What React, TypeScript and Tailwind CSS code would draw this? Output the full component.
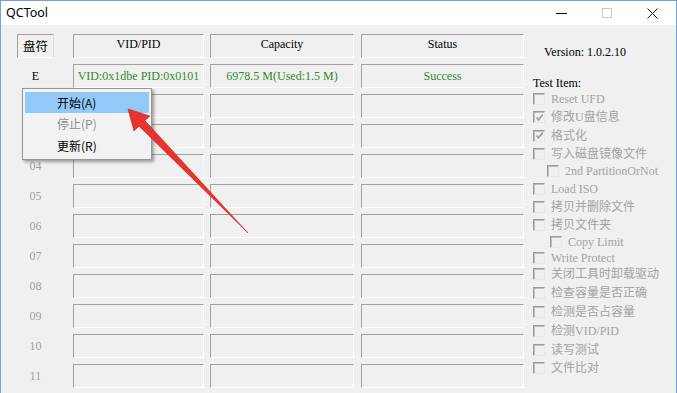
import React from "react";

const serif = "font-['Liberation_Serif','Noto_Sans_CJK_SC',serif]";

const rows = ["E", "02", "03", "04", "05", "06", "07", "08", "09", "10", "11"];

// test items: label, row height, indent, checked
const testItems: { label: string; h: string; indent: string; checked?: boolean }[] = [
  { label: "Reset UFD", h: "h-[18px]", indent: "pl-0" },
  { label: "修改U盘信息", h: "h-[18px]", indent: "pl-0", checked: true },
  { label: "格式化", h: "h-[19px]", indent: "pl-0", checked: true },
  { label: "写入磁盘镜像文件", h: "h-[17px]", indent: "pl-0" },
  { label: "2nd PartitionOrNot", h: "h-[18px]", indent: "pl-[14px]" },
  { label: "Load ISO", h: "h-[18px]", indent: "pl-0" },
  { label: "拷贝并删除文件", h: "h-[18px]", indent: "pl-0" },
  { label: "拷贝文件夹", h: "h-[17px]", indent: "pl-0" },
  { label: "Copy Limit", h: "h-[17px]", indent: "pl-[17px]" },
  { label: "Write Protect", h: "h-[15px]", indent: "pl-0" },
  { label: "关闭工具时卸载驱动", h: "h-[18px]", indent: "pl-0" },
  { label: "检查容量是否正确", h: "h-[20px]", indent: "pl-0" },
  { label: "检测是否占容量", h: "h-[18px]", indent: "pl-0" },
  { label: "检测VID/PID", h: "h-[19px]", indent: "pl-0" },
  { label: "读写测试", h: "h-[19px]", indent: "pl-0" },
  { label: "文件比对", h: "h-[18px]", indent: "pl-0" },
];

const Cell = ({ w, children, top }: { w: string; children?: React.ReactNode; top?: boolean }) => (
  <div
    className={`${w} h-[24px] flex justify-center ${top ? "items-start pt-[2px]" : "items-center"} border-t border-l border-[#a0a0a0] border-r-white border-b-white border-r border-b`}
  >
    {children}
  </div>
);

const CheckBox = ({ checked }: { checked?: boolean }) => (
  <div className="w-[12px] h-[12px] border-t border-l border-[#9c9c9c] border-r border-b border-r-[#e8e8e8] border-b-[#e8e8e8] shadow-[inset_1px_1px_0_#bdbdbd] flex items-center justify-center">
    {checked && (
      <svg width="9" height="9" viewBox="0 0 9 9">
        <path d="M1.5 4.5 L3.5 6.8 L7.8 1.5" fill="none" stroke="#9a9a9a" strokeWidth="1.6" />
      </svg>
    )}
  </div>
);

export default function App() {
  return (
    <div className="relative w-[677px] h-[393px] overflow-hidden bg-[#f0f0f0] border-t border-l border-r border-[#6fa3da]">
      {/* title bar */}
      <div className="h-[24px] bg-white flex items-center justify-between">
        <span className="pl-[5px] text-[12.5px] text-black font-['Noto_Sans',sans-serif] leading-none">QCTool</span>
        <div className="flex items-center h-full">
          <div className="w-[46px] flex justify-center">
            <div className="w-[11px] h-px bg-black" />
          </div>
          <div className="w-[46px] flex justify-center">
            <div className="w-[10px] h-[10px] border border-[#c8c8c8]" />
          </div>
          <div className="w-[46px] flex justify-center pr-[2px]">
            <svg width="11" height="11" viewBox="0 0 11 11">
              <path d="M0.5 0.5 L10.5 10.5 M10.5 0.5 L0.5 10.5" stroke="#111" strokeWidth="1" />
            </svg>
          </div>
        </div>
      </div>

      {/* client */}
      <div className={`flex ${serif} text-[12px] leading-[14px]`}>
        {/* table */}
        <div className="pl-[16px] pt-[9px] flex flex-col">
          <div className="flex h-[30px]">
            <div className="w-[37px] h-[24px] mr-[19px] border-t border-l border-[#a0a0a0] border-r border-b border-r-[#dcdcdc] border-b-white flex justify-center items-center text-black font-['Noto_Sans_CJK_SC',sans-serif] text-[12.5px]">
              盘符
            </div>
            <Cell w="w-[131px]" top>
              VID/PID
            </Cell>
            <div className="w-[6px]" />
            <Cell w="w-[144px]" top>
              Capacity
            </Cell>
            <div className="w-[7px]" />
            <Cell w="w-[163px]" top>
              Status
            </Cell>
          </div>
          {rows.map((r, i) => (
            <div key={r} className="flex h-[30px]">
              <div className={`w-[37px] mr-[19px] h-[24px] flex items-center justify-center ${i === 0 ? "text-black" : "text-[#a0a0a0]"}`}>
                {r}
              </div>
              <Cell w="w-[131px]">{i === 0 && <span className="text-[#2f8a2f]">VID:0x1dbe PID:0x0101</span>}</Cell>
              <div className="w-[6px]" />
              <Cell w="w-[144px]">{i === 0 && <span className="text-[#2f8a2f]">6978.5 M(Used:1.5 M)</span>}</Cell>
              <div className="w-[7px]" />
              <Cell w="w-[163px]">{i === 0 && <span className="text-[#2f8a2f]">Success</span>}</Cell>
            </div>
          ))}
        </div>

        {/* right panel */}
        <div className="ml-[9px] flex flex-col">
          <div className="pl-[11px] pt-[20px] text-black">Version: 1.0.2.10</div>
          <div className="mt-[18px] h-[13px] leading-[13px] text-black">Test Item:</div>
          <div className="flex flex-col">
            {testItems.map((t) => (
              <div key={t.label} className={`${t.h} ${t.indent} flex items-center gap-[6px] text-[#a3a3a3]`}>
                <CheckBox checked={t.checked} />
                <span className="whitespace-nowrap">{t.label}</span>
              </div>
            ))}
          </div>
        </div>
      </div>

      {/* context menu */}
      <div className="absolute left-[21px] top-[87px] w-[130px] h-[72px] bg-[#f2f2f2] border border-[#979797] shadow-[2px_2px_3px_rgba(0,0,0,0.35)] pt-[3px] px-[2px] font-['Noto_Sans_CJK_SC',sans-serif] text-[12px]">
        <div className="h-[21px] bg-[#91c9f7] flex items-center pl-[32px] text-black">开始(A)</div>
        <div className="h-[22px] flex items-center pl-[32px] text-[#8d8d8d]">停止(P)</div>
        <div className="h-[22px] flex items-center pl-[32px] text-black">更新(R)</div>
      </div>

      {/* annotation arrow */}
      <svg className="absolute left-0 top-0 pointer-events-none" width="677" height="393" viewBox="0 0 677 393">
        <polygon
          points="127,108 149,115 143.9,119.6 247,232 138.1,125.2 133,130"
          fill="#e8332e"
          stroke="#c92520"
          strokeWidth="0.6"
          strokeLinejoin="round"
        />
      </svg>
    </div>
  );
}
